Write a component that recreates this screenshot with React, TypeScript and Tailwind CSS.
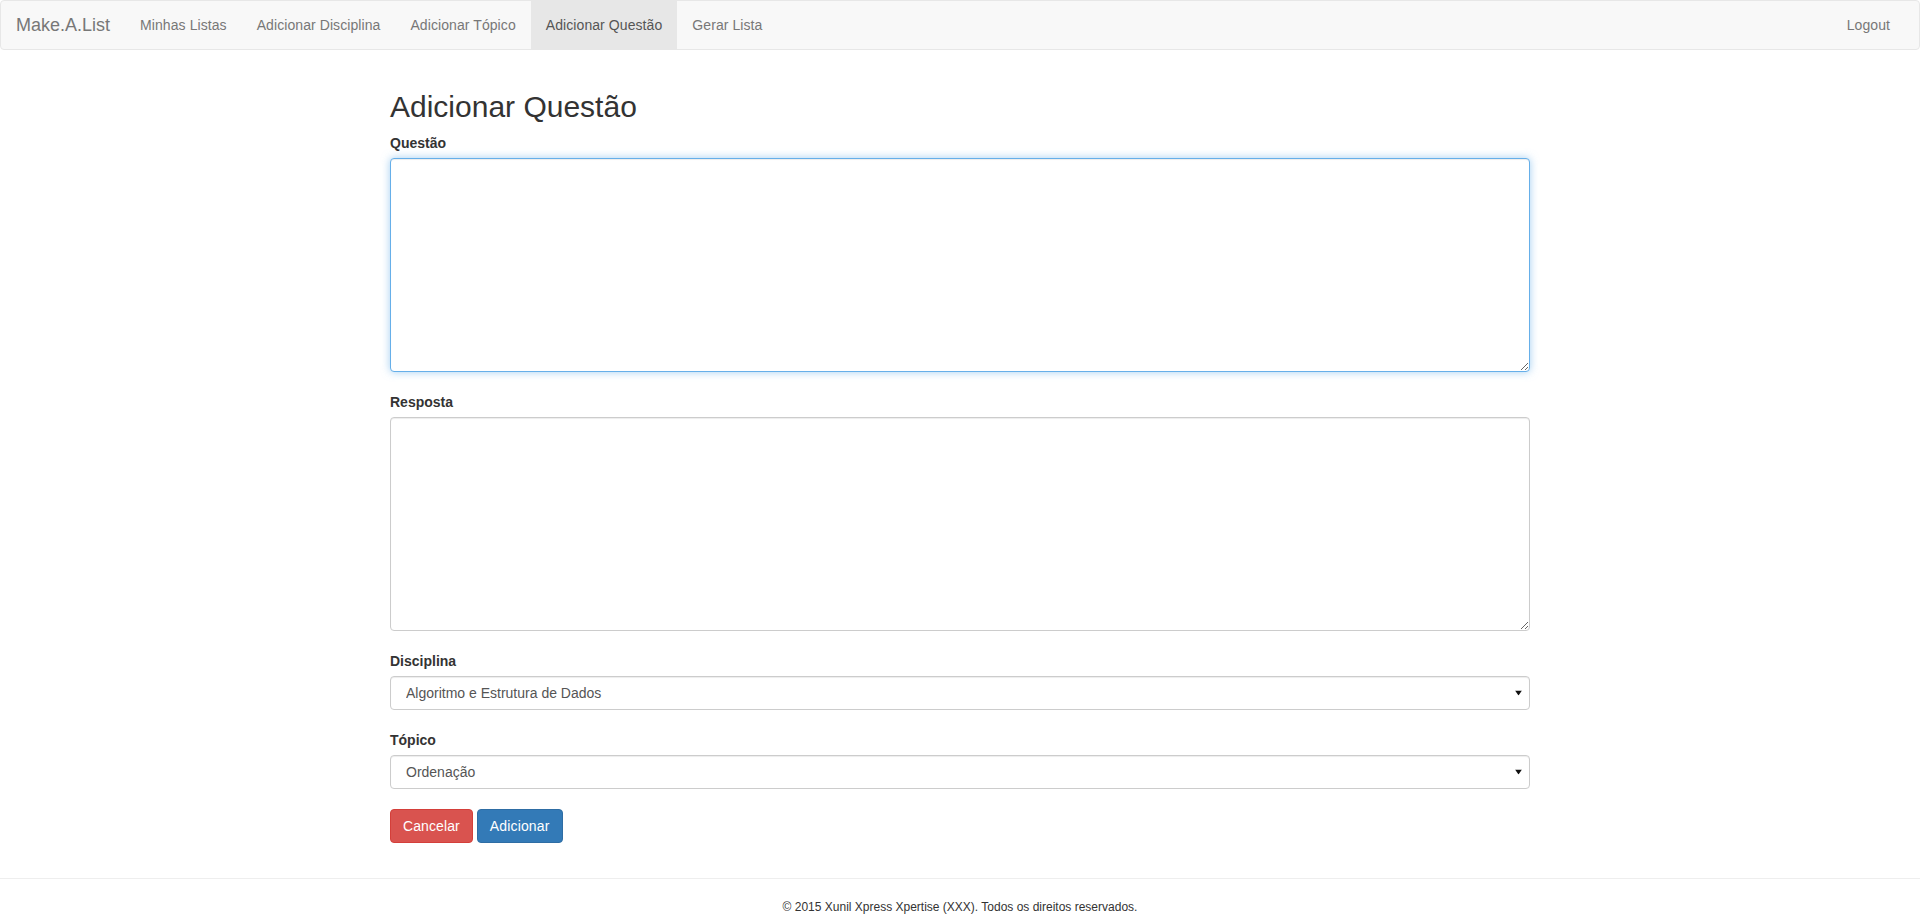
import React from "react";

const navItems = [
  { label: "Minhas Listas", active: false },
  { label: "Adicionar Disciplina", active: false },
  { label: "Adicionar Tópico", active: false },
  { label: "Adicionar Questão", active: true },
  { label: "Gerar Lista", active: false },
];

function Caret() {
  return (
    <svg
      className="pointer-events-none absolute right-[8px] top-1/2 -translate-y-1/2"
      width="7"
      height="5"
      viewBox="0 0 7 5"
    >
      <polygon points="0,0 7,0 3.5,5" fill="#111" />
    </svg>
  );
}

function SelectField({ label, value }: { label: string; value: string }) {
  return (
    <div className="mb-[20px]">
      <label className="mb-[5px] block text-[14px] font-bold leading-[20px] text-[#333]">{label}</label>
      <div className="relative">
        <select
          defaultValue={value}
          className="block h-[34px] w-full appearance-none rounded-[4px] border border-[#ccc] bg-white pl-[15px] pr-[24px] text-[14px] leading-[20px] text-[#555] shadow-[inset_0_1px_1px_rgba(0,0,0,0.075)] outline-none"
          style={{ fontFamily: '"Liberation Sans", Arial, sans-serif' }}
        >
          <option>{value}</option>
        </select>
        <Caret />
      </div>
    </div>
  );
}

export default function App() {
  return (
    <div
      className="min-h-[917px] bg-white text-[14px] leading-[20px] text-[#333]"
      style={{ fontFamily: '"Liberation Sans", Arial, Helvetica, sans-serif' }}
    >
      <nav className="flex h-[50px] items-stretch justify-between rounded-[4px] border border-[#e7e7e7] bg-[#f8f8f8] px-[15px]">
        <div className="flex items-stretch">
          <a className="flex items-center pr-[15px] text-[18px] leading-[20px] text-[#777]">Make.A.List</a>
          {navItems.map((item) => (
            <a
              key={item.label}
              className={
                item.active
                  ? "flex items-center bg-[#e7e7e7] px-[15px] text-[14px] tracking-[0.08px] text-[#555]"
                  : "flex items-center px-[15px] text-[14px] tracking-[0.08px] text-[#777]"
              }
            >
              {item.label}
            </a>
          ))}
        </div>
        <div className="flex items-stretch">
          <a className="flex items-center pr-[14px] text-[14px] tracking-[0.08px] text-[#777]">Logout</a>
        </div>
      </nav>

      <div className="mx-auto w-[1140px] pt-[40px]">
        <h2 className="mb-[10px] text-[30px] font-normal leading-[33px] text-[#333]">Adicionar Questão</h2>

        <div className="mb-[20px]">
          <label className="mb-[5px] block text-[14px] font-bold leading-[20px]">Questão</label>
          <textarea
            className="block h-[214px] w-full rounded-[4px] border border-[#66afe9] bg-white px-[12px] py-[6px] text-[14px] text-[#555] shadow-[inset_0_1px_1px_rgba(0,0,0,0.075),0_0_8px_rgba(102,175,233,0.6)] outline-none"
          />
        </div>

        <div className="mb-[20px]">
          <label className="mb-[5px] block text-[14px] font-bold leading-[20px]">Resposta</label>
          <textarea
            className="block h-[214px] w-full rounded-[4px] border border-[#ccc] bg-white px-[12px] py-[6px] text-[14px] text-[#555] shadow-[inset_0_1px_1px_rgba(0,0,0,0.075)] outline-none"
          />
        </div>

        <SelectField label="Disciplina" value="Algoritmo e Estrutura de Dados" />
        <SelectField label="Tópico" value="Ordenação" />

        <div className="flex gap-[4px]">
          <button className="h-[34px] rounded-[4px] border border-[#d43f3a] bg-[#d9534f] px-[12px] text-[14px] leading-[20px] tracking-[0.1px] text-white">
            Cancelar
          </button>
          <button className="h-[34px] rounded-[4px] border border-[#2e6da4] bg-[#337ab7] px-[12px] text-[14px] leading-[20px] tracking-[0.15px] text-white">
            Adicionar
          </button>
        </div>
      </div>

      <footer className="mt-[35px] border-t border-[#eee] pt-[20px]">
        <p className="text-center text-[12px] leading-[17px] text-[#333]">
          © 2015 Xunil Xpress Xpertise (XXX). Todos os direitos reservados.
        </p>
      </footer>
    </div>
  );
}
